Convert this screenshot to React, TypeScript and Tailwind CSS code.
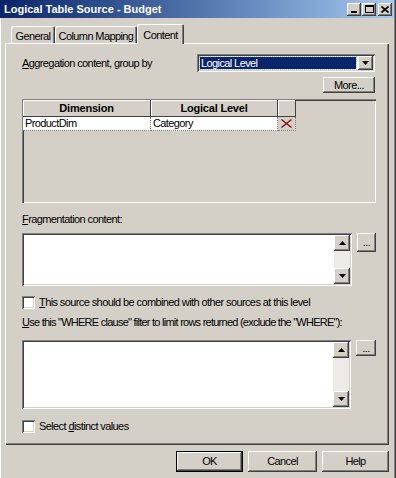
import React from "react";

const raised =
  "bg-[#d4d0c8] shadow-[inset_-1px_-1px_#404040,inset_1px_1px_#ffffff,inset_-2px_-2px_#808080]";
const sunken =
  "shadow-[inset_1px_1px_#808080,inset_-1px_-1px_#ffffff,inset_2px_2px_#404040,inset_-2px_-2px_#d4d0c8]";

function Arrow({ dir }: { dir: "up" | "down" }) {
  return (
    <svg width="7" height="4" viewBox="0 0 7 4">
      {dir === "down" ? (
        <path d="M0 0h7L3.5 4z" fill="#000" />
      ) : (
        <path d="M0 4h7L3.5 0z" fill="#000" />
      )}
    </svg>
  );
}

function ScrollArea({ height }: { height: string }) {
  return (
    <div className={`flex w-[330px] bg-white p-[2px] ${sunken} ${height}`}>
      <div className="flex-1" />
      <div className="flex w-[16px] flex-col bg-[#ecebe7]">
        <div className={`flex h-[16px] items-center justify-center ${raised}`}>
          <Arrow dir="up" />
        </div>
        <div className="flex-1" />
        <div className={`flex h-[16px] items-center justify-center ${raised}`}>
          <Arrow dir="down" />
        </div>
      </div>
    </div>
  );
}

function Checkbox({ children }: { children: React.ReactNode }) {
  return (
    <div className="flex items-center gap-[4px]">
      <div className={`h-[13px] w-[13px] bg-white ${sunken}`} />
      <span className="whitespace-nowrap">{children}</span>
    </div>
  );
}

function Button({ children, className = "" }: { children: React.ReactNode; className?: string }) {
  return (
    <div className={`flex items-center justify-center ${raised} ${className}`}>{children}</div>
  );
}

export default function App() {
  return (
    <div className="flex h-[478px] w-[396px] flex-col overflow-hidden bg-[#d4d0c8] font-['Liberation_Sans',Arial,sans-serif] text-[11px] leading-[13px] tracking-[-0.6px] text-black shadow-[inset_-1px_0_#404040,inset_-2px_0_#808080,inset_1px_0_#ffffff]">
      {/* Title bar */}
      <div className="mr-[2px] flex h-[18px] shrink-0 items-center justify-between bg-gradient-to-r from-[#0a246a] to-[#a6caf0] pl-[4px] pr-[2px]">
        <span className="text-[11px] font-bold tracking-[0px] text-white">Logical Table Source - Budget</span>
        <div className="flex items-center">
          <div className={`flex h-[13px] w-[14px] items-end justify-center pb-[3px] ${raised}`}>
            <div className="h-[2px] w-[6px] bg-black" />
          </div>
          <div className={`ml-[1px] flex h-[13px] w-[14px] items-center justify-center ${raised}`}>
            <div className="h-[8px] w-[9px] border border-t-2 border-black" />
          </div>
          <div className={`ml-[2px] flex h-[13px] w-[14px] items-center justify-center ${raised}`}>
            <svg width="8" height="7" viewBox="0 0 8 7">
              <path d="M0.5 0.5l7 6M7.5 0.5l-7 6" stroke="#000" strokeWidth="1.6" />
            </svg>
          </div>
        </div>
      </div>

      {/* Tabs */}
      <div className="mx-[5px] mr-[7px] mt-[6px] flex h-[19px] shrink-0 items-end pl-[6px]">
        <div className="flex h-[17px] w-[44px] items-center justify-center rounded-t-[2px] pt-[3px] shadow-[inset_1px_1px_#ffffff,inset_-1px_0_#404040,inset_-2px_0_#808080]">
          General
        </div>
        <div className="flex h-[17px] w-[82px] items-center justify-center rounded-t-[2px] pt-[3px] shadow-[inset_1px_1px_#ffffff,inset_-1px_0_#404040,inset_-2px_0_#808080]">
          Column Mapping
        </div>
        <div className="relative z-10 -mb-[1px] flex h-[20px] w-[47px] items-center justify-center rounded-t-[2px] bg-[#d4d0c8] pt-[3px] shadow-[inset_1px_1px_#ffffff,inset_-1px_0_#404040,inset_-2px_0_#808080]">
          Content
        </div>
      </div>

      {/* Panel */}
      <div className="mx-[5px] mr-[7px] flex h-[402px] shrink-0 flex-col pl-[17px] pr-[13px] shadow-[inset_1px_1px_#ffffff,inset_-1px_-1px_#404040,inset_-2px_-2px_#808080]">
        <div className="mt-[11px] flex h-[18px] items-center justify-between">
          <span>
            <span className="underline">A</span>ggregation content, group by
          </span>
          <div className={`mr-[1px] flex h-[18px] w-[178px] items-center bg-white p-[2px] ${sunken}`}>
            <div className="m-[1px] flex h-[12px] flex-1 items-center bg-[#0a246a] pl-[1px] text-white outline outline-1 outline-dotted outline-[#a6caf0]">
              Logical Level
            </div>
            <div className={`ml-[1px] flex h-[14px] w-[15px] items-center justify-center ${raised}`}>
              <Arrow dir="down" />
            </div>
          </div>
        </div>

        <Button className="mr-[1px] mt-[5px] h-[16px] w-[52px] self-end">More...</Button>

        {/* Grid */}
        <div className="mt-[6px] h-[104px] bg-[#d4d0c8] pl-[1px] pt-[1px] shadow-[inset_1px_1px_#808080,inset_2px_2px_#404040,inset_-1px_-1px_#ffffff]">
          <div className="flex h-[17px] font-bold tracking-[-0.2px]">
            <div className="flex w-[128px] items-center justify-center border-b border-r border-[#404040] shadow-[inset_1px_1px_#ffffff]">
              Dimension
            </div>
            <div className="flex w-[127px] items-center justify-center border-b border-r border-[#404040] shadow-[inset_1px_1px_#ffffff]">
              Logical Level
            </div>
            <div className="w-[18px] border-b border-r border-[#404040] shadow-[inset_1px_1px_#ffffff]" />
          </div>
          <div className="flex h-[14px]">
            <div className="flex w-[128px] items-center border-b border-r border-dotted border-[#808080] bg-white pl-[2px]">
              ProductDim
            </div>
            <div className="flex w-[127px] items-center border-b border-r border-dotted border-[#808080] bg-white pl-[2px]">
              Category
            </div>
            <div className="flex w-[18px] items-center justify-center border-b border-r border-dotted border-[#808080]">
              <svg width="11" height="9" viewBox="0 0 11 9">
                <path d="M0.5 0.5l10 8M10.5 0.5l-10 8" stroke="#800000" strokeWidth="1.2" />
              </svg>
            </div>
          </div>
        </div>

        <div className="mt-[10px]">
          <span className="underline">F</span>ragmentation content:
        </div>
        <div className="mt-[7px] flex items-start gap-[5px]">
          <ScrollArea height="h-[53px]" />
          <Button className="h-[19px] w-[19px]">...</Button>
        </div>

        <div className="mt-[10px]">
          <Checkbox>
            <span className="underline">T</span>his source should be combined with other sources at this level
          </Checkbox>
        </div>
        <div className="mt-[7px] whitespace-nowrap tracking-[-0.75px]">
          <span className="underline">U</span>se this "WHERE clause" filter to limit rows returned (exclude the "WHERE"):
        </div>
        <div className="mt-[11px] flex items-start gap-[5px]">
          <ScrollArea height="h-[69px]" />
          <Button className="h-[16px] w-[20px]">...</Button>
        </div>
        <div className="mt-[11px]">
          <Checkbox>
            Select <span className="underline">d</span>istinct values
          </Checkbox>
        </div>
      </div>

      {/* Bottom buttons */}
      <div className="mr-[7px] mt-[6px] flex justify-end gap-[5px]">
        <div className="h-[21px] w-[67px] border border-black">
          <Button className="h-full w-full">OK</Button>
        </div>
        <Button className="h-[21px] w-[69px]">Cancel</Button>
        <Button className="h-[21px] w-[67px]">Help</Button>
      </div>
    </div>
  );
}
